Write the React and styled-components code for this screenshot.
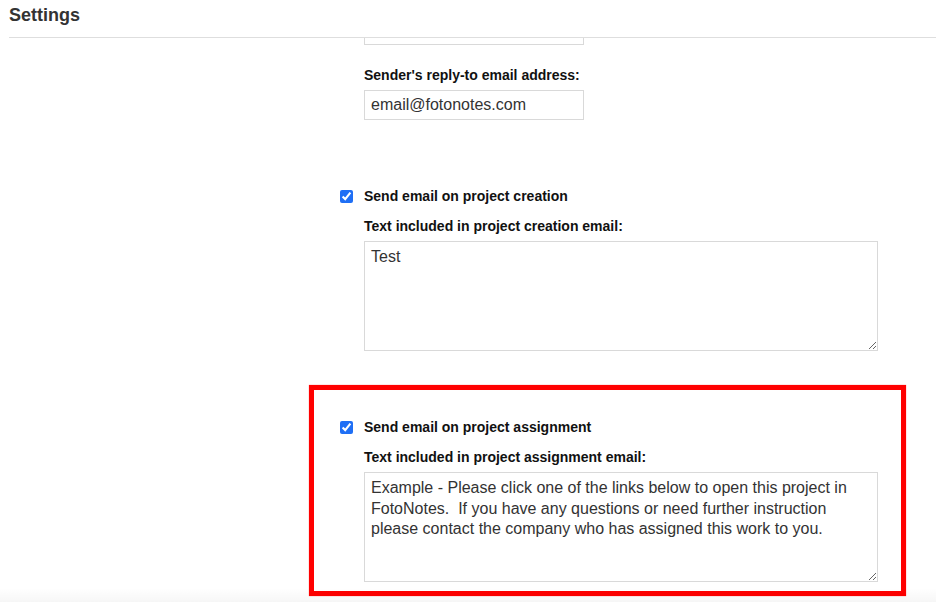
import { useLayoutEffect, useRef } from 'react';
import styled, { createGlobalStyle } from 'styled-components';

const ASSIGNMENT_TEXT =
  'Example - Please click one of the links below to open this project in FotoNotes.  If you have any questions or need further instruction please contact the company who has assigned this work to you.';

// how far the settings panel is scrolled down in the screenshot
const SCROLL_OFFSET = 66;

const SettingsPage = () => {
  const scrollRef = useRef(null);

  useLayoutEffect(() => {
    if (scrollRef.current) {
      scrollRef.current.scrollTop = SCROLL_OFFSET;
    }
  }, []);

  return (
    <Page>
      <GlobalStyle />
      <Header>
        <Title>Settings</Title>
      </Header>

      <Scroller ref={scrollRef}>
        <Form>
          <Column>
            <Section>
              <Field>
                <FieldLabel>Sender's name:</FieldLabel>
                <TextInput defaultValue="Property Management" />
              </Field>
            </Section>

            <Section $gap={22}>
              <Field>
                <FieldLabel>Sender's reply-to email address:</FieldLabel>
                <TextInput defaultValue="email@fotonotes.com" />
              </Field>
            </Section>

            <Section $gap={68}>
              <CheckRow>
                <Checkbox type="checkbox" defaultChecked />
                <CheckLabel>Send email on project creation</CheckLabel>
              </CheckRow>
              <Field $gap={13}>
                <FieldLabel>Text included in project creation email:</FieldLabel>
                <TextArea defaultValue="Test" />
              </Field>
            </Section>

            <Highlight>
              <CheckRow>
                <Checkbox type="checkbox" defaultChecked />
                <CheckLabel>Send email on project assignment</CheckLabel>
              </CheckRow>
              <Field $gap={13}>
                <FieldLabel>Text included in project assignment email:</FieldLabel>
                <TextArea defaultValue={ASSIGNMENT_TEXT} />
              </Field>
            </Highlight>
          </Column>
        </Form>
      </Scroller>

      <BottomShade />
    </Page>
  );
};

const GlobalStyle = createGlobalStyle`
  html, body {
    margin: 0;
    padding: 0;
    background: #fff;
  }
  body {
    font-family: "Liberation Sans", Arial, Helvetica, sans-serif;
    overflow: hidden;
  }
`;

const Page = styled.div`
  height: 100vh;
  display: flex;
  flex-direction: column;
  overflow: hidden;
  position: relative;
  background: #fff;
`;

const Header = styled.header`
  flex: none;
  height: 38px;
  box-sizing: border-box;
  margin-left: 9px;
  padding-top: 4px;
  border-bottom: 1px solid #dedede;
`;

const Title = styled.h1`
  margin: 0;
  font-size: 18px;
  line-height: 22px;
  font-weight: bold;
  color: #333;
`;

const Scroller = styled.main`
  flex: 1;
  overflow: hidden;
`;

const Form = styled.div`
  display: grid;
  grid-template-columns: 309px 597px;
  padding: 20px 0 80px;
`;

const Column = styled.div`
  grid-column: 2;
  display: flex;
  flex-direction: column;
`;

const Section = styled.section`
  display: flex;
  flex-direction: column;
  padding-left: 31px;
  margin-top: ${props => props.$gap || 0}px;
`;

const Highlight = styled.section`
  display: flex;
  flex-direction: column;
  box-sizing: border-box;
  width: 597px;
  margin-top: 34px;
  padding: 29px 23px 9px 26px;
  border: 5px solid #ff0000;
  box-shadow: 0 0 1px rgba(255, 0, 0, 0.6);
`;

const CheckRow = styled.label`
  display: flex;
  align-items: center;
  gap: 11px;
  height: 17px;
`;

const Checkbox = styled.input`
  margin: 0;
  width: 13px;
  height: 13px;
  accent-color: #1f6ff5;
`;

const CheckLabel = styled.span`
  font-size: 14px;
  line-height: 17px;
  font-weight: bold;
  color: #111;
`;

const Field = styled.div`
  display: flex;
  flex-direction: column;
  align-items: flex-start;
  padding-left: 24px;
  margin-top: ${props => props.$gap || 0}px;
`;

const FieldLabel = styled.div`
  font-size: 14px;
  line-height: 17px;
  font-weight: bold;
  color: #111;
  margin-bottom: 6px;
`;

const TextInput = styled.input`
  box-sizing: border-box;
  width: 220px;
  height: 30px;
  margin: 0;
  padding: 0 6px;
  border: 1px solid #d9d9d9;
  border-radius: 0;
  font-family: inherit;
  font-size: 16px;
  color: #333;
  outline: none;
`;

const TextArea = styled.textarea`
  box-sizing: border-box;
  width: 514px;
  height: 110px;
  margin: 0;
  padding: 5px 6px;
  border: 1px solid #d9d9d9;
  border-radius: 0;
  font-family: inherit;
  font-size: 16px;
  line-height: 20.5px;
  color: #333;
  resize: both;
  outline: none;
`;

const BottomShade = styled.div`
  position: absolute;
  left: 0;
  right: 0;
  bottom: 0;
  height: 14px;
  pointer-events: none;
  background: linear-gradient(to bottom, rgba(0, 0, 0, 0), rgba(0, 0, 0, 0.035));
`;

export default SettingsPage;
